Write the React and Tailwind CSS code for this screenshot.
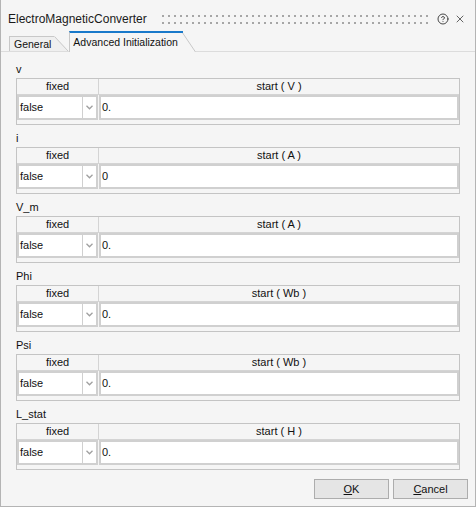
import { CircleHelp, X } from "lucide-react";

const params = [
  { name: "v", unit: "V", value: "0." },
  { name: "i", unit: "A", value: "0" },
  { name: "V_m", unit: "A", value: "0." },
  { name: "Phi", unit: "Wb", value: "0." },
  { name: "Psi", unit: "Wb", value: "0." },
  { name: "L_stat", unit: "H", value: "0." },
];

function Grip() {
  return (
    <svg className="w-full h-[9px] block">
      <defs>
        <pattern id="grip" width="6" height="7" patternUnits="userSpaceOnUse">
          <rect width="2" height="2" fill="#a6a6a6" />
        </pattern>
      </defs>
      <rect width="100%" height="100%" fill="url(#grip)" />
    </svg>
  );
}

function ParamBlock({ name, unit, value }) {
  return (
    <div className="mb-[6px]">
      <div className="h-[14px] leading-[14px] mb-[2px]">{name}</div>
      <div className="h-[47px] border border-[#c4c4c4] flex flex-col">
        {/* header */}
        <div className="h-[16px] flex border-b border-[#d4d4d4] leading-[15px]">
          <div className="w-[82px] text-center border-r border-[#d4d4d4]">fixed</div>
          <div className="flex-1 text-center">start ( {unit} )</div>
        </div>
        {/* value row */}
        <div className="h-[25px] flex">
          <div className="w-[81px] flex bg-white border-2 border-[#d0d0d0]">
            <div className="flex-1 pl-[1px] leading-[21px]">false</div>
            <div className="w-[14px] border-l border-[#d0d0d0] flex items-center justify-center">
              <svg width="7" height="5" viewBox="0 0 7 5">
                <polyline points="0.5,0.8 3.5,3.8 6.5,0.8" fill="none" stroke="#a0a0a0" strokeWidth="1.3" />
              </svg>
            </div>
          </div>
          <div className="flex-1 ml-[1px] bg-white border-2 border-[#d0d0d0] pl-[1px] leading-[21px]">
            {value}
          </div>
        </div>
      </div>
    </div>
  );
}

export default function App() {
  return (
    <div className="w-[476px] h-[507px] bg-[#f5f5f5] border-x border-b border-[#b4b4b4] flex flex-col font-['Liberation_Sans',Arial,sans-serif] text-[11px] text-[#111]">
      {/* Title bar */}
      <div className="h-[30px] flex items-center pt-[7px] pl-[7px] pr-[9px]">
        <span className="text-[12px] text-[#1a1a1a]">ElectroMagneticConverter</span>
        <div className="flex-1 min-w-0 ml-[15px] mr-[9px] h-[9px] mt-[2px]">
          <Grip />
        </div>
        <CircleHelp size={12} strokeWidth={1.8} className="shrink-0 text-[#333] mr-[5px]" />
        <X size={12} strokeWidth={1.5} className="shrink-0 text-[#333]" />
      </div>

      {/* Tabs */}
      <div className="h-[22px] flex items-end pl-[8px] border-b border-[#dcdcdc]">
        <div className="h-[15px] flex">
          <div className="h-full border-l border-t border-[#c8c8c8] bg-[#efefef] pl-[4px] pr-[3px] leading-[14px] text-[10.5px]">
            General
          </div>
          <svg width="14" height="15" className="shrink-0">
            <polygon points="0,0 1,0 14,15 0,15" fill="#efefef" />
            <line x1="0.5" y1="0.5" x2="14" y2="15" stroke="#c8c8c8" />
          </svg>
        </div>
        <div className="h-[21px] -mb-px ml-[1px] flex">
          <div className="h-full border-l border-[#c8c8c8] border-t-2 border-t-[#1979ca] bg-[#f5f5f5] pl-[3px] pr-[4px] leading-[18px] text-[10.5px]">
            Advanced Initialization
          </div>
          <svg width="14" height="21" className="shrink-0">
            <polygon points="0,0 1,0 14,21 0,21" fill="#f5f5f5" />
            <line x1="0" y1="1" x2="13.5" y2="21" stroke="#c8c8c8" />
            <line x1="0" y1="1" x2="1" y2="1" stroke="#1979ca" strokeWidth="2" />
          </svg>
        </div>
        <div className="flex-1" />
      </div>

      {/* Content */}
      <div className="px-[15px] pt-[10px]">
        {params.map((p) => (
          <ParamBlock key={p.name} {...p} />
        ))}
      </div>

      <div className="flex-1" />

      {/* Buttons */}
      <div className="flex justify-end gap-[4px] pr-[7px] pb-[7px]">
        <button className="w-[75px] h-[20px] bg-[#e5e5e5] border border-[#adadad] text-[11px]">
          <span className="underline">O</span>K
        </button>
        <button className="w-[75px] h-[20px] bg-[#e5e5e5] border border-[#adadad] text-[11px]">
          <span className="underline">C</span>ancel
        </button>
      </div>
    </div>
  );
}
